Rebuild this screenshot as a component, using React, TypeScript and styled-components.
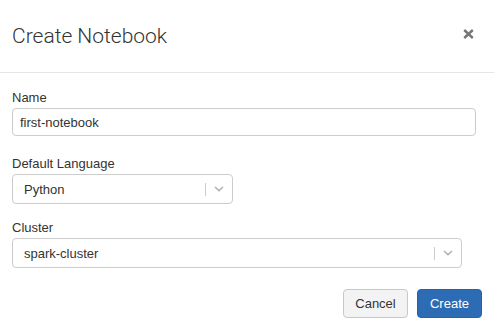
import React from "react";
import styled, { createGlobalStyle } from "styled-components";

const Global = createGlobalStyle`
  html, body { margin: 0; padding: 0; background: #fff; }
  body { font-family: "Liberation Sans", Arial, sans-serif; color: #333; }
  * { box-sizing: border-box; }
`;

const Modal = styled.div`
  width: 494px;
  height: 332px;
  background: #fff;
  display: flex;
  flex-direction: column;
`;

const Header = styled.div`
  height: 73px;
  border-bottom: 1px solid #e5e5e5;
  display: flex;
  justify-content: space-between;
  align-items: flex-start;
  padding: 0 20px 0 12px;
`;

const Title = styled.h4`
  margin: 24px 0 0;
  font-family: Roboto, "Liberation Sans", sans-serif;
  font-weight: 300;
  font-size: 21px;
  line-height: 24px;
  color: #333;
`;

const Close = styled.button`
  margin-top: 29px;
  padding: 0;
  border: 0;
  background: none;
  width: 11px;
  height: 10px;
  display: flex;
  cursor: pointer;
`;

const Body = styled.div`
  padding: 16px 12px 0;
  display: flex;
  flex-direction: column;
`;

const Group = styled.div<{ $top: number }>`
  margin-top: ${(p) => p.$top}px;
  display: flex;
  flex-direction: column;
`;

const Label = styled.label`
  font-size: 13px;
  line-height: 18px;
  color: #333;
  margin-bottom: 1px;
`;

const Input = styled.input`
  height: 28px;
  width: 464px;
  border: 1px solid #ccc;
  border-radius: 4px;
  padding: 0 7px;
  font-family: "Liberation Sans", Arial, sans-serif;
  font-size: 13px;
  color: #333;
  outline: none;
`;

const Select = styled.div<{ $width: number }>`
  width: ${(p) => p.$width}px;
  height: 30px;
  border: 1px solid #ccc;
  border-radius: 4px;
  display: flex;
  align-items: center;
  padding-left: 11px;
  font-size: 13px;
  color: #333;
`;

const Value = styled.span`
  flex: 1;
`;

const Separator = styled.span`
  width: 1px;
  height: 13px;
  background: #ccc;
`;

const Indicator = styled.span`
  width: 26px;
  display: flex;
  justify-content: center;
  align-items: center;
`;

const Footer = styled.div`
  display: flex;
  justify-content: flex-end;
  gap: 9px;
  padding: 21px 12px 0;
`;

const Button = styled.button<{ $primary?: boolean }>`
  height: 29px;
  width: 65px;
  border-radius: 4px;
  font-family: "Liberation Sans", Arial, sans-serif;
  font-size: 13px;
  border: 1px solid ${(p) => (p.$primary ? "#2862a8" : "#c8c8c8")};
  background: ${(p) => (p.$primary ? "#2c6cb4" : "#f3f3f3")};
  color: ${(p) => (p.$primary ? "#fff" : "#333")};
  padding: 0;
`;

const Chevron = () => (
  <svg width="10" height="6" viewBox="0 0 10 6">
    <path d="M1 1 L5 4.6 L9 1" fill="none" stroke="#b3b3b3" strokeWidth="1.6" />
  </svg>
);

const SelectBox = ({ value, width }: { value: string; width: number }) => (
  <Select $width={width}>
    <Value>{value}</Value>
    <Separator />
    <Indicator>
      <Chevron />
    </Indicator>
  </Select>
);

export default function App() {
  return (
    <>
      <Global />
      <Modal>
        <Header>
          <Title>Create Notebook</Title>
          <Close aria-label="Close">
            <svg width="11" height="10" viewBox="0 0 11 10">
              <path d="M1.2 1 L9.8 9 M9.8 1 L1.2 9" stroke="#777" strokeWidth="2.4" />
            </svg>
          </Close>
        </Header>
        <Body>
          <Group $top={0}>
            <Label>Name</Label>
            <Input defaultValue="first-notebook" />
          </Group>
          <Group $top={19}>
            <Label>Default Language</Label>
            <SelectBox value="Python" width={221} />
          </Group>
          <Group $top={15}>
            <Label>Cluster</Label>
            <SelectBox value="spark-cluster" width={450} />
          </Group>
        </Body>
        <Footer>
          <Button>Cancel</Button>
          <Button $primary>Create</Button>
        </Footer>
      </Modal>
    </>
  );
}
